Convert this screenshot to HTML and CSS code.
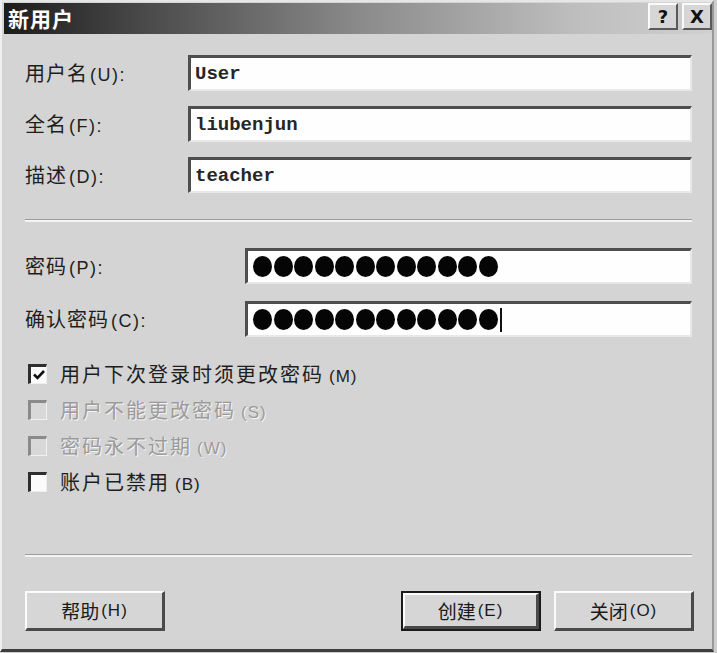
FILE: index.html
```html
<!DOCTYPE html>
<html lang="zh-CN">
<head>
<meta charset="utf-8">
<title>新用户</title>
<link rel="stylesheet" href="styles.css">
</head>
<body>
<div class="window">
  <div class="titlebar">
    <span class="title">新用户</span>
    <div class="tbuttons">
      <span class="tbtn">?</span>
      <span class="tbtn">X</span>
    </div>
  </div>
  <div class="content">
    <div class="field">
      <span class="label">用户名<span class="acc">(U):</span></span>
      <div class="input"><span class="mono">User</span></div>
    </div>
    <div class="field">
      <span class="label">全名<span class="acc">(F):</span></span>
      <div class="input"><span class="mono">liubenjun</span></div>
    </div>
    <div class="field last">
      <span class="label">描述<span class="acc">(D):</span></span>
      <div class="input"><span class="mono">teacher</span></div>
    </div>

    <div class="sep sep1"></div>

    <div class="field pw">
      <span class="label wide">密码<span class="acc">(P):</span></span>
      <div class="input tall">
        <div class="dots"><i></i><i></i><i></i><i></i><i></i><i></i><i></i><i></i><i></i><i></i><i></i><i></i></div>
      </div>
    </div>
    <div class="field pw last">
      <span class="label wide">确认密码<span class="acc">(C):</span></span>
      <div class="input tall">
        <div class="dots"><i></i><i></i><i></i><i></i><i></i><i></i><i></i><i></i><i></i><i></i><i></i><i></i></div>
        <span class="caret"></span>
      </div>
    </div>

    <div class="checks">
      <div class="check">
        <span class="box"><svg width="14" height="14" viewBox="0 0 14 14"><path d="M2 6.5 L5.5 10 L12 3" fill="none" stroke="#111" stroke-width="2.6"/></svg></span>
        <span class="ctext">用户下次登录时须更改密码<span class="acc">(M)</span></span>
      </div>
      <div class="check disabled">
        <span class="box"></span>
        <span class="ctext">用户不能更改密码<span class="acc">(S)</span></span>
      </div>
      <div class="check disabled">
        <span class="box"></span>
        <span class="ctext">密码永不过期<span class="acc">(W)</span></span>
      </div>
      <div class="check">
        <span class="box"></span>
        <span class="ctext">账户已禁用<span class="acc">(B)</span></span>
      </div>
    </div>

    <div class="sep sep2"></div>

    <div class="buttons">
      <span class="btn">帮助<span class="acc">(H)</span></span>
      <span class="spacer"></span>
      <span class="btn default">创建<span class="acc">(E)</span></span>
      <span class="btn">关闭<span class="acc">(O)</span></span>
    </div>
  </div>
</div>
</body>
</html>
```

FILE: styles.css
```css
html, body {
  margin: 0;
  padding: 0;
}
body {
  width: 717px;
  height: 653px;
  overflow: hidden;
  background: #cfcfcf;
  font-family: "Noto Sans CJK SC", "Noto Sans", sans-serif;
  color: #1e1e1e;
}
.window {
  box-sizing: border-box;
  width: 714px;
  height: 652px;
  background: #d4d4d4;
  border-left: 2px solid #efefef;
  border-top: 2px solid #e6e6e6;
  border-right: 2px solid #9a9a9a;
  border-bottom: 3px solid #3e3e3e;
}
.titlebar {
  height: 31px;
  margin: 1px 0 0 2px;
  background: linear-gradient(to right, #1c1c1c 0%, #4a4a4a 20%, #8a8a8a 50%, #bdbdbd 80%, #d0d0d0 100%);
  display: flex;
  align-items: center;
  justify-content: space-between;
  padding: 0 0 0 4px;
}
.title {
  color: #fff;
  font-weight: 700;
  font-size: 21px;
  letter-spacing: 1px;
  line-height: 1;
}
.tbuttons {
  display: flex;
  gap: 4px;
  align-items: flex-start;
  height: 100%;
}
.tbtn {
  box-sizing: border-box;
  width: 30px;
  height: 27px;
  background: #d6d6d6;
  border: 2px solid;
  border-color: #fafafa #5a5a5a #5a5a5a #fafafa;
  font-family: "DejaVu Sans", sans-serif;
  font-weight: 700;
  font-size: 18px;
  line-height: 23px;
  text-align: center;
  color: #111;
}
.content {
  padding: 21px 20px 0 23px;
}
.field {
  display: flex;
  align-items: center;
  height: 36px;
  margin-bottom: 15px;
}
.field.last {
  margin-bottom: 0;
}
.label {
  width: 163px;
  flex: none;
  font-size: 20px;
  letter-spacing: 1px;
  line-height: 1;
}
.label.wide {
  width: 220px;
}
.acc {
  font-family: "Liberation Sans", sans-serif;
  font-size: 18px;
  letter-spacing: 1.5px;
  padding-left: 2px;
}
.input {
  flex: 1;
  height: 100%;
  box-sizing: border-box;
  background: #fefefe;
  border-style: solid;
  border-width: 3px 2px 2px 3px;
  border-color: #4e4e4e #e8e8e8 #e8e8e8 #4e4e4e;
  display: flex;
  align-items: center;
  padding-left: 4px;
}
.mono {
  font-family: "Liberation Mono", monospace;
  font-size: 19px;
  font-weight: 700;
  color: #262626;
  letter-spacing: 0;
}
.sep {
  height: 0;
  border-top: 1px solid #9c9c9c;
  border-bottom: 2px solid #f4f4f4;
}
.sep1 {
  margin: 26px 0 26px 0;
}
.field.pw {
  height: 36px;
  margin-bottom: 17px;
}
.field.pw.last {
  margin-bottom: 0;
}
.input.tall {
  padding-left: 5px;
}
.dots {
  display: flex;
  gap: 1.5px;
}
.dots i {
  display: block;
  width: 19px;
  height: 21px;
  border-radius: 50%;
  background: #050505;
}
.caret {
  width: 2px;
  height: 24px;
  background: #111;
  margin-left: 2px;
}
.checks {
  margin-top: 19px;
  display: flex;
  flex-direction: column;
}
.check {
  display: flex;
  align-items: center;
  height: 36px;
  padding-left: 3px;
}
.box {
  box-sizing: border-box;
  width: 19px;
  height: 20px;
  background: #fbfbfb;
  border-style: solid;
  border-width: 3px 1px 1px 3px;
  border-color: #2e2e2e #eeeeee #eeeeee #2e2e2e;
  display: flex;
  align-items: center;
  justify-content: center;
  margin-right: 13px;
  flex: none;
}
.check.disabled .box {
  background: #d8d8d8;
  border-color: #8a8a8a #f0f0f0 #f0f0f0 #8a8a8a;
}
.ctext {
  font-size: 20px;
  letter-spacing: 2px;
  line-height: 1;
}
.check .acc {
  font-size: 17px;
  letter-spacing: 1px;
  padding-left: 5px;
}
.check.disabled .ctext {
  color: #9b9b9b;
  text-shadow: 1px 1px 0 #f4f4f4;
}
.sep2 {
  margin: 54px 0 34px 0;
}
.buttons {
  display: flex;
  align-items: center;
  gap: 13px;
  margin-right: -2px;
}
.spacer {
  flex: 1;
}
.btn {
  box-sizing: border-box;
  width: 140px;
  height: 40px;
  background: #d6d6d6;
  border-style: solid;
  border-width: 2px 3px 3px 2px;
  border-color: #fbfbfb #4a4a4a #4a4a4a #fbfbfb;
  display: flex;
  align-items: center;
  justify-content: center;
  font-size: 19px;
  line-height: 1;
  color: #1a1a1a;
}
.btn .acc {
  font-size: 17px;
  letter-spacing: 1px;
}
.btn.default {
  width: 136px;
  height: 36px;
  margin-right: 2px;
  outline: 2px solid #1a1a1a;
  outline-offset: 0;
}
```
